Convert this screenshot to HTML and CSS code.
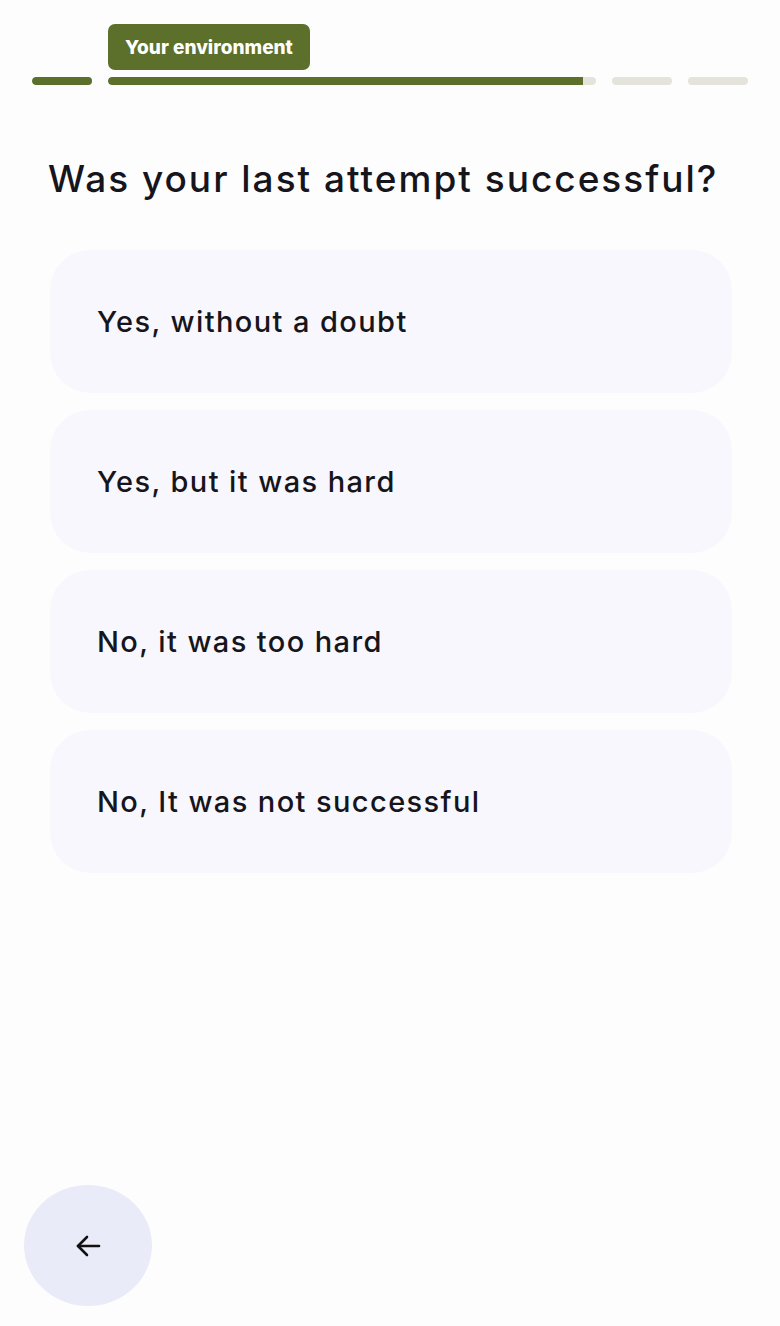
FILE: index.html
```html
<!DOCTYPE html>
<html lang="en">
<head>
<meta charset="utf-8">
<title>Your environment</title>
<link rel="stylesheet" href="styles.css">
</head>
<body>
<div class="page">
  <header class="progress-head">
    <div class="badge-row"><span class="badge">Your environment</span></div>
    <div class="progress">
      <div class="seg seg-small"><div class="fill" style="width:100%"></div></div>
      <div class="seg seg-big"><div class="fill" style="width:97.3%"></div></div>
      <div class="seg seg-small"></div>
      <div class="seg seg-small"></div>
    </div>
  </header>
  <main class="content">
    <h1 class="question">Was your last attempt successful?</h1>
    <div class="options">
      <button class="option">Yes, without a doubt</button>
      <button class="option">Yes, but it was hard</button>
      <button class="option">No, it was too hard</button>
      <button class="option">No, It was not successful</button>
    </div>
  </main>
  <footer class="nav">
    <button class="back" aria-label="Back">
      <svg width="28" height="28" viewBox="0 0 28 28" fill="none" stroke="#111" stroke-width="2.6" stroke-linecap="round" stroke-linejoin="round"><path d="M25 14H4"/><path d="M13 5L4 14L13 23"/></svg>
    </button>
  </footer>
</div>
</body>
</html>
```
FILE: styles.css
```css
* { box-sizing: border-box; }
html, body { margin: 0; padding: 0; background: #fefdfe; }
body { font-family: "Inter", "Noto Sans", sans-serif; color: #16151b; }
.page { min-height: 1326px; display: flex; flex-direction: column; }
.progress-head { padding: 24px 32px 0 32px; }
.badge-row { padding-left: 76px; height: 46px; display: flex; }
.badge {
  display: inline-flex; align-items: center; justify-content: center;
  width: 202px; height: 46px; border-radius: 7px;
  background: #5c6f2b; color: #fff; font-weight: 800; font-size: 19px;
  letter-spacing: 0; padding-top: 1px;
}
.progress { display: flex; gap: 16px; margin-top: 7px; }
.seg { height: 8px; border-radius: 4px; background: #e4e4dc; overflow: hidden; }
.seg-small { width: 60px; flex: none; }
.seg-big { flex: 1; }
.fill { height: 100%; background: #5c6f2b; border-radius: 4px 0 0 4px; }
.content { padding: 0 40px 0 48px; }
.question { margin: 0; padding-top: 72px; font-size: 37px; font-weight: 450; line-height: 44px; letter-spacing: 2px; white-space: nowrap; }
.options { display: flex; flex-direction: column; gap: 17px; margin-top: 49px; padding-left: 2px; padding-right: 8px; }
.option {
  height: 143px; border: 0; border-radius: 40px; background: #f8f7fd;
  text-align: left; padding: 0 0 0 47px; font-family: inherit; font-size: 29px;
  font-weight: 500; letter-spacing: 1.4px;
  color: #16151b; cursor: pointer;
}
.nav { margin-top: auto; padding: 0 0 20px 24px; }
.back {
  width: 128px; height: 121px; border-radius: 50%; border: 0; background: #e9ebf8;
  display: flex; align-items: center; justify-content: center; cursor: pointer; padding: 0;
}
```
